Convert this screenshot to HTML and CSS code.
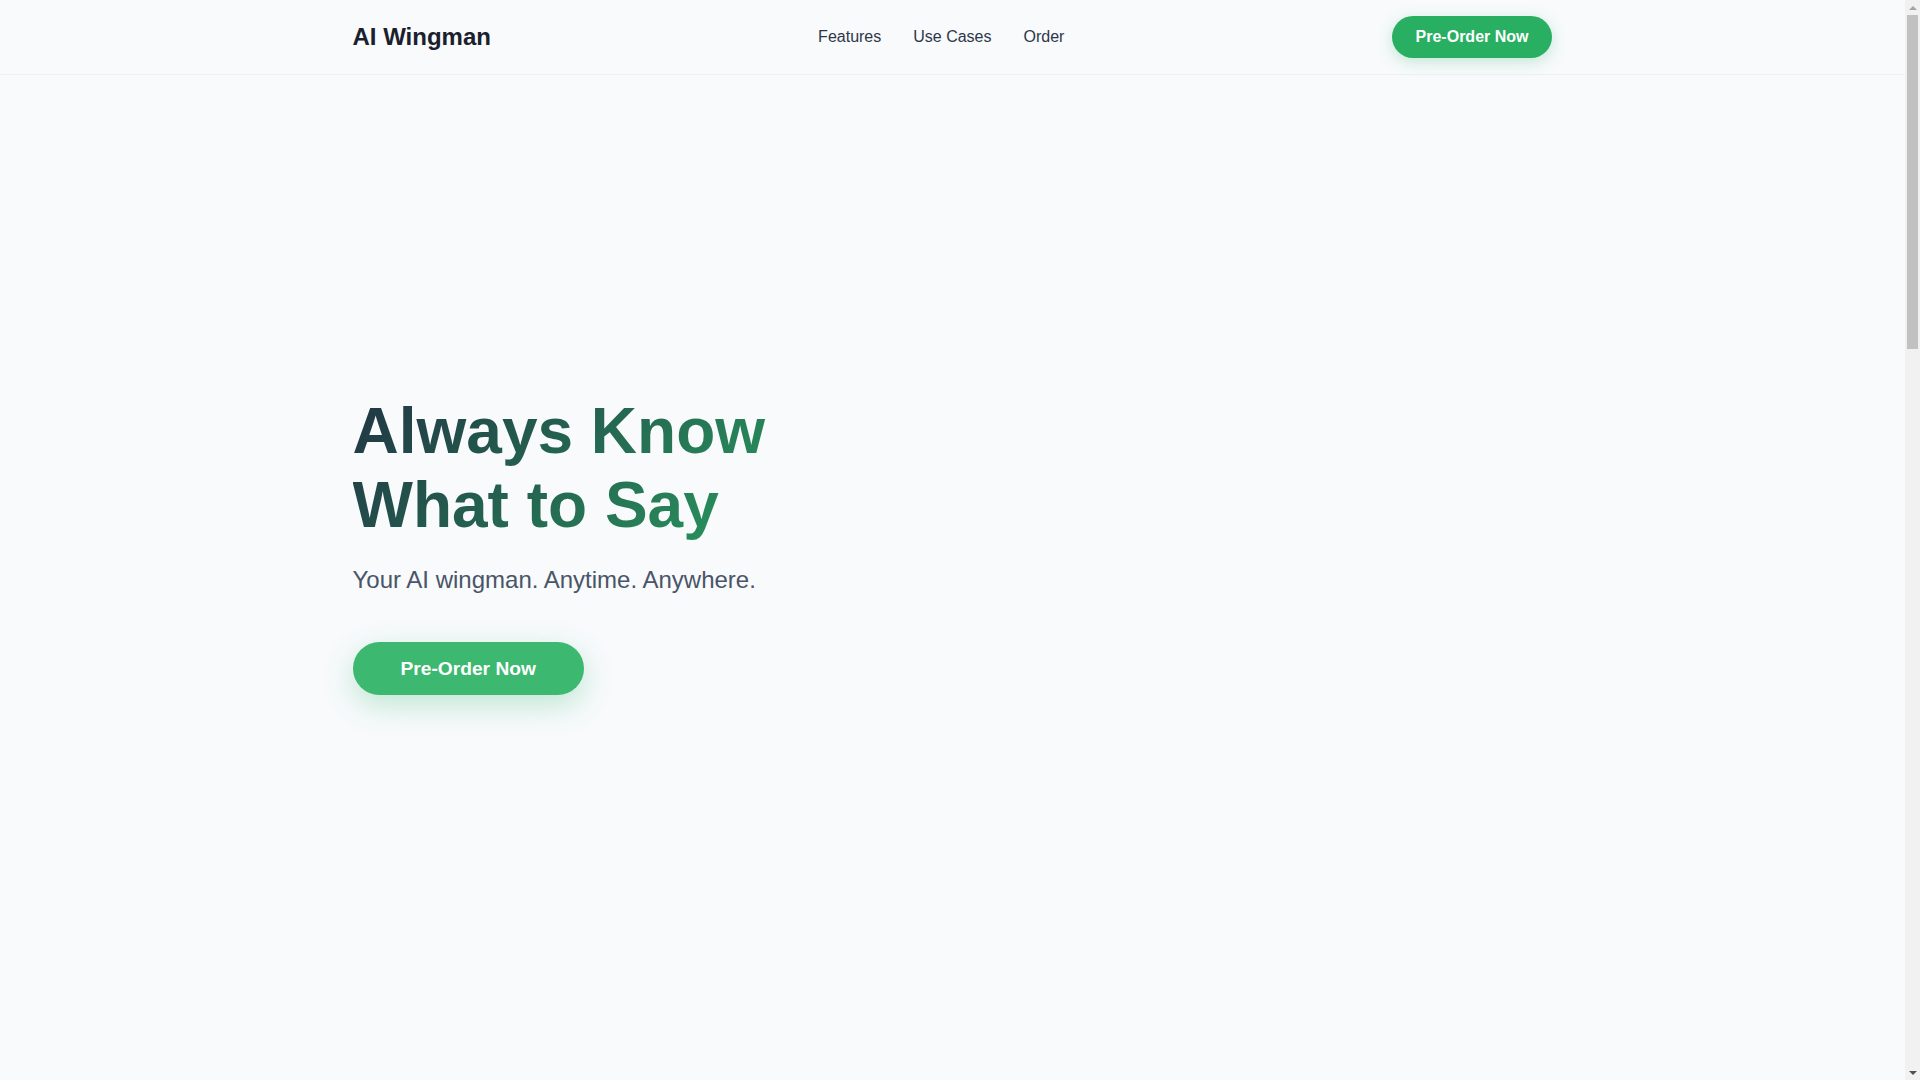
FILE: index.html
```html
<!DOCTYPE html>
<html lang="en">
<head>
<meta charset="utf-8">
<title>AI Wingman</title>
<link rel="stylesheet" href="styles.css">
</head>
<body>
<div class="page">
  <header class="site-header">
    <div class="container header-inner">
      <a class="logo" href="#">AI Wingman</a>
      <nav class="nav">
        <a href="#features">Features</a>
        <a href="#use-cases">Use Cases</a>
        <a href="#order">Order</a>
      </nav>
      <a class="btn btn-nav" href="#order">Pre-Order Now</a>
    </div>
  </header>
  <main>
    <section class="hero">
      <div class="container hero-grid">
        <div class="hero-text">
          <h1 class="hero-title">Always Know<br>What to Say</h1>
          <p class="hero-sub">Your AI wingman. Anytime. Anywhere.</p>
          <a class="btn btn-hero" href="#order">Pre-Order Now</a>
        </div>
        <div class="hero-visual"></div>
      </div>
    </section>
  </main>
</div>
<div class="scrollbar" aria-hidden="true">
  <span class="sb-arrow sb-up"></span>
  <div class="sb-track"><span class="sb-thumb"></span></div>
  <span class="sb-arrow sb-down"></span>
</div>
</body>
</html>
```
FILE: styles.css
```css
* { box-sizing: border-box; }
html, body { margin: 0; padding: 0; }
body {
  font-family: "Liberation Sans", Arial, sans-serif;
  background: #f8fafc;
  color: #2d3748;
  display: flex;
  height: 100vh;
  overflow: hidden;
}
a { text-decoration: none; }
.page {
  flex: 1;
  min-width: 0;
}
.container {
  max-width: 1200px;
  margin: 0 auto;
}
.site-header {
  background: #f8fafc;
  border-bottom: 1px solid #eef1f4;
}
.header-inner {
  display: flex;
  align-items: center;
  justify-content: space-between;
  padding: 16px 0;
}
.logo {
  font-size: 24px;
  font-weight: 700;
  color: #1a202c;
}
.nav {
  display: flex;
  gap: 32px;
}
.nav a {
  font-size: 16px;
  color: #2d3748;
}
.btn {
  display: inline-block;
  color: #ffffff;
  font-weight: 700;
  border-radius: 999px;
}
.btn-nav {
  background: #28af61;
  font-size: 16px;
  line-height: 18px;
  padding: 12px 24px;
  box-shadow: 0 4px 15px rgba(39, 174, 96, 0.25);
}
.hero {
  min-height: 940px;
  display: flex;
  align-items: center;
}
.hero-grid {
  width: 1200px;
  display: grid;
  grid-template-columns: 1fr 1fr;
  gap: 64px;
}
.hero-title {
  margin: 0 0 20px;
  font-size: 64px;
  line-height: 1.15;
  font-weight: 700;
  background: linear-gradient(135deg, #213444 0%, #2bb465 100%);
  -webkit-background-clip: text;
  background-clip: text;
  color: transparent;
}
.hero-sub {
  margin: 0 0 44px;
  font-size: 24px;
  line-height: 36px;
  color: #4a5568;
}
.btn-hero {
  background: #3db870;
  font-size: 19.2px;
  line-height: 21px;
  padding: 16px 48px;
  box-shadow: 0 10px 30px rgba(61, 184, 112, 0.3);
}
.scrollbar {
  width: 15px;
  height: 100vh;
  background: #f1f1f1;
  display: flex;
  flex-direction: column;
  align-items: center;
}
.sb-arrow {
  width: 15px;
  height: 15px;
  display: flex;
  align-items: center;
  justify-content: center;
}
.sb-arrow::before {
  content: "";
  width: 0;
  height: 0;
  border-left: 4px solid transparent;
  border-right: 4px solid transparent;
}
.sb-up::before { border-bottom: 4px solid #a3a3a3; }
.sb-down::before { border-top: 4px solid #505050; }
.sb-track {
  flex: 1;
  width: 15px;
  padding: 0 2px;
}
.sb-thumb {
  display: block;
  height: 334px;
  background: #c1c1c1;
}
```
